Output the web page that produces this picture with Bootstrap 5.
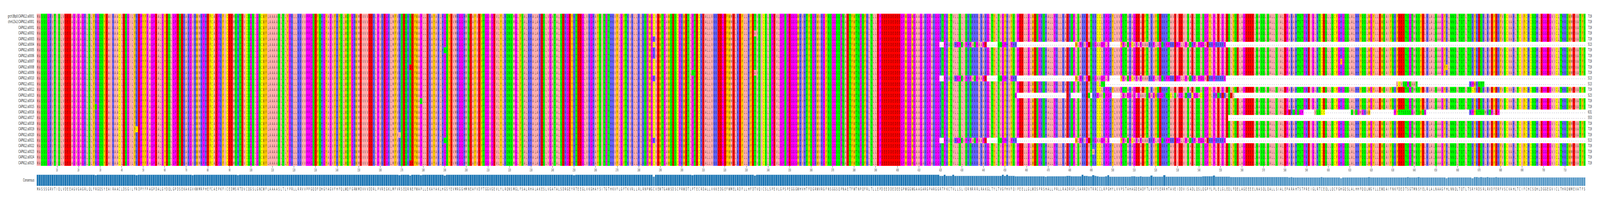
<!DOCTYPE html>
<html lang="en">

<head>
    <meta charset="UTF-8">
    <meta name="viewport" content="width=device-width, initial-scale=1.0">
    <title>CAPN12 alignment</title>
    <link href="https://cdn.jsdelivr.net/npm/bootstrap@5.3.3/dist/css/bootstrap.min.css" rel="stylesheet">
    <style>
        :root { --u: calc(100vw / 7483); --sx: 1; }
        html, body { overflow: hidden; }
        body { font-family: "DejaVu Sans", sans-serif; background: #fff; color: #262626; }
        .aln-page { height: 524px; padding-top: 35px; overflow: hidden; }
        .aln-row { height: 14.41px; line-height: 14.41px; font-size: 9.8px; }
        .aln-name { width: calc(160 * var(--u)); margin-right: calc(11 * var(--u)); flex: none; white-space: nowrap; }
        .aln-name span { display: inline-block; transform: scaleX(var(--sx)); transform-origin: 100% 50%; }
        .aln-count { margin-left: calc(11 * var(--u)); white-space: nowrap; }
        .aln-count span { display: inline-block; transform: scaleX(var(--sx)); transform-origin: 0 50%; }
        .aln-cell { width: calc(10.079 * var(--u)); flex: none; font-size: 10.5px; color: rgba(0, 0, 0, .72); }
        .aln-cell i { display: inline-block; font-style: normal; transform: scaleX(calc(var(--sx) * .82)); }
        .zp-ali { background: #ffafaf; }
        .zp-aro { background: #ffc800; }
        .zp-pos { background: #6464ff; }
        .zp-neg { background: #ff0000; }
        .zp-pol { background: #00ff00; }
        .zp-gp { background: #ff00ff; }
        .zp-cys { background: #ffff00; }
        .aln-ticks { padding-left: calc(216.36 * var(--u)); height: 22px; }
        .aln-tick { width: calc(100.79 * var(--u)); flex: none; font-size: 9px; line-height: 11px; color: #333; }
        .aln-tick b { display: block; width: 1px; height: 5px; background: #777; margin-bottom: 1px; }
        .aln-tick span { display: inline-block; transform: scaleX(calc(var(--sx) * .75)); }
        .aln-bars { height: 29px; line-height: 29px; font-size: 9.8px; }
        .aln-col { width: calc(10.079 * var(--u)); height: 29px; flex: none; }
        .aln-bar { width: 100%; border-right: 1px solid rgba(255, 255, 255, .6); border-top: 1px solid #c6dcec; }
        .aln-letters { height: 16px; line-height: 16px; padding-left: calc(171 * var(--u)); }
        .aln-letters .aln-cell { color: #333; }
    </style>
</head>

<body>
    <div class="aln-page d-flex flex-column">
        <div id="rows"></div>
        <div id="ticks" class="aln-ticks d-flex"></div>
        <div id="bars" class="aln-bars d-flex"></div>
        <div id="letters" class="aln-letters d-flex"></div>
    </div>

    <script>
        // The window can be narrower than the 7483px plot: columns follow --u, glyphs are squeezed by --sx
        document.documentElement.style.setProperty("--sx", window.innerWidth / 7483);

        // Consensus, 719 columns, ten per chunk
        const consensus = [
            "MASSSGRVTI", "QLVDEEAGVG", "AGRLQLFRGQ", "SYEAIRAACL", "DSGILFRDPY", "FPAGPDALGY", "DQLGPDSEKA", "KGVKWMRPHE",
            "FCAEPKFICE", "DMSRTDVCQG", "SLGNCWFLAA", "AASLTLYPRL",
            "LRRVVPPGQD", "FQHGYAGVFH", "FQLWQFGRWM", "DVVVDDRLPV", "REGKLMFVRS", "EQRNEFWAPL", "LEKAYAKLHG", "SYEVMRGGHM",
            "NEAFVDFTGG", "VGEVLYLRQN", "SMGLFSALRH", "ALAKESLVGA",
            "TALSDRGEYR", "TEEGLVKGHA", "YSITGTHKVF", "LGFTKVRLLR", "LRNPWGCVEW", "TGAWSDSCPR", "WDTLPTECRD", "ALLVKKEDGE",
            "FWMELRDFLL", "HFDTVQICSL", "SPEVLGPSPE", "GGGWHVHTFQ",
            "GRWVRGFNSG", "GSQPNAETFW", "TNPQFRLTLL", "EPDEEDDEDE", "EGPWGGWGAA", "GARGPARGGR", "TPKCTVLLSL", "IQRNRRRLRA",
            "KGLTYLTVGF", "HVFQIPEELL", "GLWDSPRSHA", "LLPRLLRADR",
            "SPLSARRDVT", "RRCCLRPGHY", "LVVPSTAHAG", "DEADFTLRVF", "SERRHTAVEI", "DDVISADLQS", "LQGPYLPLEL", "GLEQLFQELA",
            "GEEEELNASQ", "LQALLSIALE", "PARAHTSTPR", "EIGLRTCEQL",
            "LQCFGHGQSL", "ALHHFQQLWG", "YLLEWQAIFN", "KFDEDTSGTM", "NSYELRLALN", "AAGFHLNNQL", "TQTLTSRYRD", "SRLRVDFERF",
            "VSCVAHLTCI", "FCHCSQHLDG", "GEGVICLTHR", "QWMEVATFS"
        ].join("");

        const names = ["grch38p0:CAPN12:a0001", "chm13v2:CAPN12:a0001"];
        for (let i = 1; i <= 25; i++) names.push("CAPN12:a" + String(i).padStart(4, "0"));

        const rows = names.map(() => consensus.split(""));

        // write letters into a row, row and col are 1-based as on the axis
        function put(row, col, text) {
            for (let i = 0; i < text.length; i++) rows[row - 1][col - 1 + i] = text[i];
        }
        function gap(row, from, to) {
            put(row, from, "-".repeat(to - from + 1));
        }

        // single substitutions
        [[17, 28, "Q"], [20, 73, "L"], [21, 47, "C"], [26, 94, "H"],
         [22, 169, "L"], [10, 174, "D"], [27, 174, "D"], [16, 179, "Q"], [7, 190, "S"], [23, 190, "S"],
         [24, 250, "H"], [5, 287, "R"], [7, 287, "R"], [8, 287, "R"], [12, 287, "R"], [23, 287, "R"],
         [11, 305, "S"], [4, 334, "A"], [11, 334, "A"], [5, 469, "R"], [25, 491, "A"],
         [9, 606, "Y"], [10, 655, "Y"], [14, 667, "C"]
        ].forEach(s => put(s[0], s[1], s[2]));

        // rows that leave the consensus at the alternative frame
        [6, 12, 23].forEach(r => {
            gap(r, 420, 421);
            put(r, 422, "PHAQVHGPSVPHPAQPAAPE");
            gap(r, 442, 446);
            put(r, 447, "SQGPHLPHR");
            gap(r, 456, 482);
            put(r, 483, "WLPRVPDSRGAAGPLG");
            gap(r, 499, 503);
            put(r, 504, "FPAQPCAPAPAAARRPLAPQRPPRRDPPLLPASRPLPGGAEHRPRRRRG");
            gap(r, 553, 719);
        });

        put(13, 494, "LTS");
        gap(13, 497, 631);
        put(13, 632, "LCVSSPSAAT");
        gap(13, 642, 665);
        put(13, 666, "RPWRSTT");
        gap(13, 673, 719);

        put(15, 455, "G");
        gap(15, 456, 478);
        gap(15, 481, 485);
        put(15, 489, "Q");
        gap(15, 490, 490);
        put(15, 493, "PAVSPGP");
        gap(15, 500, 503);
        put(15, 504, "LPAPGAGVGAAVSGAGWRGGRTQCLSAPGLTKHCPGACQGPYLHPQRDRAQDL");
        gap(15, 557, 719);

        put(18, 582, "ERSGSGP");
        gap(18, 589, 593);
        put(18, 594, "VSSCC");
        gap(18, 599, 610);
        put(18, 611, "SVSGMGKAW");
        gap(18, 620, 630);
        put(18, 631, "PYTTSSSSGATSWSG");
        gap(18, 646, 665);
        put(18, 666, "RPYSTSSMRTPLEP");
        gap(18, 680, 719);

        gap(19, 554, 719);

        const groups = { A: "ali", I: "ali", L: "ali", M: "ali", V: "ali", F: "aro", W: "aro", Y: "aro", H: "pos", K: "pos", R: "pos", D: "neg", E: "neg", S: "pol", T: "pol", N: "pol", Q: "pol", G: "gp", P: "gp", C: "cys" };

        function cell(letter, colored) {
            const cls = colored && groups[letter] ? " zp-" + groups[letter] : "";
            return '<span class="aln-cell d-flex justify-content-center' + cls + '"><i>' + letter + "</i></span>";
        }

        function nameCell(name) {
            return '<div class="aln-name d-flex justify-content-end"><span>' + name + "</span></div>";
        }

        let html = "";
        rows.forEach((row, r) => {
            const count = row.filter(c => c !== "-").length;
            html += '<div class="aln-row d-flex">' + nameCell(names[r]);
            html += row.map(c => cell(c, true)).join("");
            html += '<div class="aln-count"><span>' + count + "</span></div></div>";
        });
        document.getElementById("rows").innerHTML = html;

        let ticks = "";
        for (let t = 10; t <= 710; t += 10) {
            ticks += '<div class="aln-tick d-flex flex-column align-items-center"><b></b><span>' + t + "</span></div>";
        }
        document.getElementById("ticks").innerHTML = ticks;

        // bar height and strength follow how many rows agree with the consensus
        let bars = nameCell("Consensus");
        for (let c = 0; c < consensus.length; c++) {
            const frac = rows.filter(row => row[c] === consensus[c]).length / rows.length;
            bars += '<div class="aln-col d-flex align-items-end"><div class="aln-bar" style="height:' + (frac * 29).toFixed(1) + "px;background:rgba(31,119,180," + frac.toFixed(2) + ')"></div></div>';
        }
        document.getElementById("bars").innerHTML = bars;

        document.getElementById("letters").innerHTML = consensus.split("").map(c => cell(c, false)).join("");
    </script>
    <script src="https://cdn.jsdelivr.net/npm/bootstrap@5.3.3/dist/js/bootstrap.bundle.min.js"></script>
</body>

</html>
